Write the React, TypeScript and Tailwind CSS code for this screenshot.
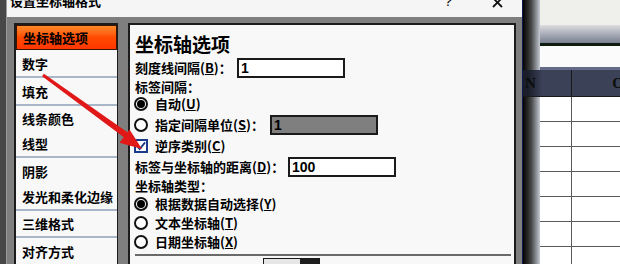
import React from 'react';

const cjk = "font-['Noto_Sans_CJK_SC',sans-serif]";

/** One entry of the left category list */
const NavItem: React.FC<{ label: string; h: string; active?: boolean }> = ({ label, h, active }) => (
  <div
    className={`${h} shrink-0 flex items-center pl-[6px] text-[13px] leading-none font-bold text-black whitespace-nowrap ${
      active
        ? 'border border-[#3a1400] bg-linear-to-b from-[#ff8a2a] via-[#ff4a00] to-[#ff3600]'
        : ''
    }`}
  >
    {label}
  </div>
);

const Sep = () => <div className="h-[2px] shrink-0 bg-[#a9b6ca]" />;

const Radio: React.FC<{ checked?: boolean }> = ({ checked }) => (
  <span className="w-[14px] h-[14px] shrink-0 rounded-full border-2 border-[#111] bg-white flex items-center justify-center">
    {checked && <span className="w-[8px] h-[8px] rounded-full bg-black" />}
  </span>
);

/** Label text with an underlined access key, e.g. 自动(U) */
const Key: React.FC<{ text: string; k: string; colon?: boolean }> = ({ text, k, colon }) => (
  <span className="whitespace-nowrap">
    {text}(<span className="underline">{k}</span>){colon ? '：' : ''}
  </span>
);

const Field: React.FC<{ value: string; disabled?: boolean }> = ({ value, disabled }) => (
  <div
    className={`w-[108px] h-[20px] border-2 border-[#1a1a1a] flex items-center pl-[2px] text-[14px] font-['Liberation_Sans',sans-serif] text-black ${
      disabled ? 'bg-[#7f7f7f]' : 'bg-white'
    }`}
  >
    {value}
  </div>
);

export default function App() {
  return (
    <div className={`relative w-[620px] h-[264px] overflow-hidden flex bg-[#7f7f7f] ${cjk}`}>
      {/* page behind, left edge */}
      <div className="w-[7px] h-full shrink-0 bg-[#474747] border-r border-[#9a9a9a]" />

      {/* dialog */}
      <div className="w-[515px] h-full shrink-0 flex flex-col">
        <div className="h-[17px] shrink-0 bg-[#f5f5f5] overflow-hidden flex items-start">
          <span className="ml-[3px] -mt-[6px] text-[13px] leading-[13px] font-bold text-black">设置坐标轴格式</span>
          <span className="ml-auto -mt-[6px] text-[14px] leading-[14px] text-black font-['Liberation_Sans',sans-serif]">?</span>
          <svg className="ml-[40px] mr-[19px] -mt-[3px]" width="11" height="11" viewBox="0 0 11 11">
            <path d="M1 1L10 10M10 1L1 10" stroke="#111" strokeWidth="1.8" />
          </svg>
        </div>

        <div className="flex-1 flex gap-[10px] pt-[6px] pl-[7px] pr-[6px] min-h-0">
          {/* category list */}
          <div className="w-[104px] h-[260px] shrink-0 border-l-2 border-t-2 border-r border-[#1c1c1c] bg-[#f8f8f8] flex flex-col">
            <NavItem label="坐标轴选项" h="h-[25px]" active />
            <NavItem label="数字" h="h-[26px]" />
            <Sep />
            <NavItem label="填充" h="h-[26px]" />
            <Sep />
            <NavItem label="线条颜色" h="h-[25px]" />
            <NavItem label="线型" h="h-[25px]" />
            <Sep />
            <NavItem label="阴影" h="h-[26px]" />
            <NavItem label="发光和柔化边缘" h="h-[25px]" />
            <Sep />
            <NavItem label="三维格式" h="h-[25px]" />
            <Sep />
            <NavItem label="对齐方式" h="h-[26px]" />
          </div>

          {/* options panel */}
          <div className="w-[388px] h-[260px] shrink-0 border-l-2 border-t-2 border-r-2 border-[#1c1c1c] bg-[#f8f8f8] pt-[6px] pl-[5px] text-[13px] leading-[14px] font-bold text-black flex flex-col">
            <div className="h-[24px] shrink-0 flex items-center text-[19px] leading-none">坐标轴选项</div>
            <div className="h-[20px] shrink-0 mt-[3px] flex items-center">
              <span className="w-[102px]"><Key text="刻度线间隔" k="B" colon /></span>
              <Field value="1" />
            </div>
            <div className="h-[18px] shrink-0 flex items-center">标签间隔：</div>
            <div className="h-[15px] shrink-0 flex items-center gap-[7px] -ml-px">
              <Radio checked />
              <Key text="自动" k="U" />
            </div>
            <div className="h-[20px] shrink-0 mt-[4px] flex items-center -ml-px">
              <Radio />
              <span className="ml-[7px] w-[115px]"><Key text="指定间隔单位" k="S" colon /></span>
              <Field value="1" disabled />
            </div>
            <div className="h-[22px] shrink-0 flex items-center gap-[7px] -ml-px">
              <span className="w-[14px] h-[14px] border-2 border-[#1b3a8c] bg-white flex items-center justify-center">
                <svg width="11" height="10" viewBox="0 0 11 10">
                  <path d="M1 5L4 8.5L10 1" stroke="#1b3a8c" strokeWidth="2" fill="none" />
                </svg>
              </span>
              <Key text="逆序类别" k="C" />
            </div>
            <div className="h-[20px] shrink-0 flex items-center">
              <span className="w-[153px]"><Key text="标签与坐标轴的距离" k="D" colon /></span>
              <Field value="100" />
            </div>
            <div className="h-[17px] shrink-0 flex items-center">坐标轴类型：</div>
            <div className="h-[19px] shrink-0 flex items-center gap-[7px] -ml-px">
              <Radio checked />
              <Key text="根据数据自动选择" k="Y" />
            </div>
            <div className="h-[19px] shrink-0 flex items-center gap-[7px] -ml-px">
              <Radio />
              <Key text="文本坐标轴" k="T" />
            </div>
            <div className="h-[19px] shrink-0 flex items-center gap-[7px] -ml-px">
              <Radio />
              <Key text="日期坐标轴" k="X" />
            </div>
            <div className="mt-[3px] mr-[3px] h-[2px] shrink-0 bg-[#6a6a6a]" />
            <div className="mt-[2px] ml-[128px] w-[57px] h-[8px] shrink-0 flex border border-[#1a1a1a]">
              <div className="flex-1 bg-[#e6e6e6]" />
              <div className="w-[19px] bg-[#1e1e1e]" />
            </div>
          </div>
        </div>
      </div>

      {/* spreadsheet behind, right edge */}
      <div className="relative w-[98px] h-full shrink-0 flex flex-col bg-white border-l border-[#101850] font-['Liberation_Serif',serif]">
        <div className="h-[25px] shrink-0 bg-[#efefeb]" />
        <div className="h-[18px] shrink-0 bg-linear-to-b from-[#dcdde0] to-[#7a8092]" />
        <div className="h-[3px] shrink-0 bg-[#0e1c10]" />
        <div className="h-[21px] shrink-0 bg-[#fbfbfb]" />
        <div className="h-[3px] shrink-0 bg-[#646a88]" />
        <div className="relative z-10 h-[27px] shrink-0 flex bg-linear-to-r from-[#1a1e2a] from-5% via-[#3b4257] via-20% to-[#3b4257] border-b border-[#1a1a1a] text-[15px] font-bold text-[#0c0c0c]">
          <div className="w-[49px] border-r border-[#1a1a1a] flex items-center pl-[2px]">N</div>
          <div className="flex-1 flex items-center justify-end -mr-[4px]">O</div>
        </div>
        {[0, 1, 2, 3, 4, 5, 6].map((i) => (
          <div key={i} className="h-[25px] shrink-0 flex border-b border-[#5a5a5a]">
            <div className="w-[49px] border-r border-[#5a5a5a]" />
          </div>
        ))}
        <div className="absolute inset-y-0 left-0 w-[17px] bg-linear-to-r from-[#050505] via-[#4a4a4a] to-[#c6ccd6]" />
      </div>

      {/* red annotation arrow */}
      <svg className="absolute left-0 top-0 pointer-events-none" width="620" height="264">
        <polygon points="42.1,76.2 43.9,73.8 127.8,132.4 124.2,137.6" fill="#e01818" />
        <polygon points="142,149 119.5,142.8 129.5,129.4" fill="#e01818" />
      </svg>
    </div>
  );
}
